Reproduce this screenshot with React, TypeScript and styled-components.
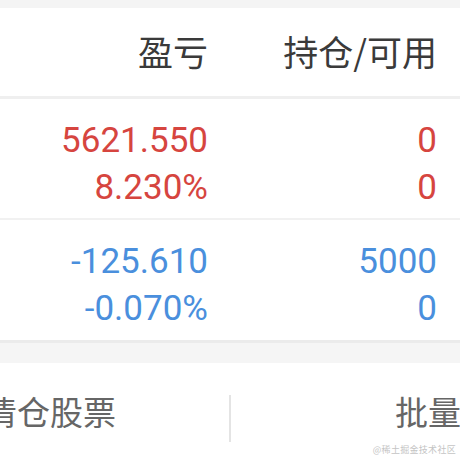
import React from 'react'
import styled, { createGlobalStyle } from 'styled-components'

type Tone = 'up' | 'down'

type PositionRow = {
  profit: string
  ratio: string
  holding: string
  available: string
  tone: Tone
}

const rows: PositionRow[] = [
  { profit: '5621.550', ratio: '8.230%', holding: '0', available: '0', tone: 'up' },
  { profit: '-125.610', ratio: '-0.070%', holding: '5000', available: '0', tone: 'down' },
]

const toneColor: Record<Tone, string> = {
  up: '#d6453f',
  down: '#4a8fdd',
}

export default function App() {
  return (
    <Root>
      <GlobalStyle />
      <TopGap />
      <HeaderRow>
        <HeaderCell>盈亏</HeaderCell>
        <HeaderCell>持仓/可用</HeaderCell>
      </HeaderRow>
      {rows.map((row, i) => (
        <DataRow key={i} $last={i === rows.length - 1}>
          <ValueCell $tone={row.tone}>
            <span>{row.profit}</span>
            <span>{row.ratio}</span>
          </ValueCell>
          <ValueCell $tone={row.tone}>
            <span>{row.holding}</span>
            <span>{row.available}</span>
          </ValueCell>
        </DataRow>
      ))}
      <SectionGap />
      <ActionBar>
        <ActionLeft>
          <ActionText>清仓股票</ActionText>
        </ActionLeft>
        <Divider />
        <ActionRight>
          <ActionText>批量操作</ActionText>
        </ActionRight>
      </ActionBar>
      <Watermark>@稀土掘金技术社区</Watermark>
    </Root>
  )
}

const GlobalStyle = createGlobalStyle`
  html, body {
    margin: 0;
    padding: 0;
    background: #ffffff;
    overflow: hidden;
  }
`

const Root = styled.div`
  position: relative;
  width: 460px;
  height: 460px;
  overflow: hidden;
  background: #ffffff;
  font-family: 'Noto Sans CJK SC', 'Noto Sans', sans-serif;
`

const TopGap = styled.div`
  height: 8px;
  background: #f4f4f4;
`

const HeaderRow = styled.div`
  display: grid;
  grid-template-columns: 208px 229px;
  align-items: center;
  height: 91px;
  box-sizing: border-box;
  padding-bottom: 4px;
  border-bottom: 3px solid #efefef;
`

const HeaderCell = styled.div`
  text-align: right;
  font-size: 35px;
  color: #3a3a3a;
  line-height: 1;
`

const DataRow = styled.div<{ $last: boolean }>`
  display: grid;
  grid-template-columns: 208px 229px;
  height: ${(p) => (p.$last ? '123px' : '121px')};
  box-sizing: border-box;
  padding-top: 18px;
  border-bottom: ${(p) => (p.$last ? '3px solid #ebebeb' : '2px solid #f1f1f1')};
`

const ValueCell = styled.div<{ $tone: Tone }>`
  display: flex;
  flex-direction: column;
  align-items: flex-end;
  font-family: Roboto, 'Liberation Sans', sans-serif;
  font-size: 35px;
  line-height: 47px;
  color: ${(p) => toneColor[p.$tone]};
`

const SectionGap = styled.div`
  height: 20px;
  background: #f5f5f5;
`

const ActionBar = styled.div`
  display: flex;
  align-items: flex-start;
  height: 110px;
  box-sizing: border-box;
  padding-top: 32px;
`

const ActionLeft = styled.div`
  width: 229px;
  display: flex;
  justify-content: flex-end;
  padding-right: 113px;
  box-sizing: border-box;
  overflow: hidden;
`

const ActionRight = styled.div`
  flex: 1;
  display: flex;
  padding-left: 164px;
  overflow: hidden;
`

const ActionText = styled.span`
  white-space: nowrap;
  font-size: 33px;
  color: #666666;
  line-height: 1;
`

const Divider = styled.div`
  width: 2px;
  height: 47px;
  background: #e4e4e4;
`

const Watermark = styled.div`
  position: absolute;
  right: 4px;
  bottom: 4px;
  font-size: 9px;
  color: #c4c4c4;
  letter-spacing: 0.3px;
`
